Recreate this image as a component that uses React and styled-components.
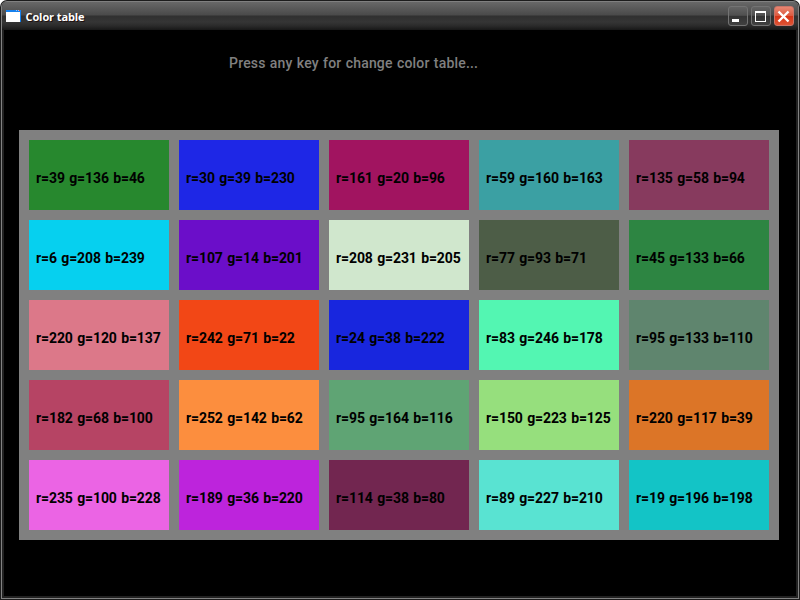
import React from 'react';
import styled, { createGlobalStyle } from 'styled-components';

const GlobalStyle = createGlobalStyle`
  * { box-sizing: border-box; }
  body { margin: 0; background: #fff; overflow: hidden; }
`;

const Window = styled.div`
  display: flex;
  width: 800px;
  height: 600px;
  padding: 1px;
  background: #1c1c1c;
  border-radius: 7px 7px 0 0;
`;

const Frame = styled.div`
  display: flex;
  flex-direction: column;
  flex: 1;
  padding: 0 2px 2px;
  background: #222;
  border: 1px solid #828282;
  border-top: 0;
  border-radius: 6px 6px 0 0;
  overflow: hidden;
`;

const TitleBar = styled.header`
  display: flex;
  align-items: flex-start;
  flex: 0 0 29px;
  margin: 0 -2px;
  padding: 4px 4px 0 4px;
  border-top: 1px solid #808080;
  background: linear-gradient(#686868 0, #5c5c5c 5px, #4a4a4a 13px, #303030 14px, #353535 20px, #2a2a2a 24px, #181818 28px);
`;

const AppIcon = styled.svg`
  margin-top: 4px;
`;

const Title = styled.h1`
  flex: 1;
  margin: 3px 0 0 4.5px;
  color: #fff;
  font: bold 11px/15px 'Open Sans', sans-serif;
  letter-spacing: -0.1px;
  text-shadow: 1px 1px 0 #201010;
`;

const Controls = styled.div`
  display: flex;
  gap: 3px;
`;

const ControlButton = styled.button`
  display: block;
  width: 20px;
  height: 20px;
  padding: 0;
  border: 1px solid ${(p) => (p.$close ? '#c97468' : '#737373')};
  border-radius: 3px;
  background: ${(p) =>
    p.$close
      ? 'linear-gradient(#e88672, #dc5a40 48%, #d63416 52%, #e05434)'
      : 'linear-gradient(#646464, #505050 46%, #343434 52%, #404040)'};

  svg { display: block; }
`;

const Client = styled.main`
  display: flex;
  flex-direction: column;
  flex: 1;
  padding: 23px 17px 0 15px;
  background: #000;
`;

const Prompt = styled.p`
  height: 77px;
  margin: 0 0 0 210px;
  color: #808080;
  font: 500 14px/20px Roboto, sans-serif;
  letter-spacing: 0.2px;
  word-spacing: 0.5px;
  white-space: nowrap;
`;

const Table = styled.section`
  display: grid;
  grid-template-columns: repeat(5, 140px);
  grid-auto-rows: 70px;
  gap: 10px;
  padding: 10px;
  width: 760px;
  background: #808080;
`;

const Swatch = styled.div`
  padding: 28px 0 0 7px;
  background: ${(p) => p.$color};
  color: #000;
  font: 700 14px/20px Roboto, sans-serif;
  letter-spacing: -0.1px;
  word-spacing: 1px;
  white-space: nowrap;
`;

const colors = [
  [39, 136, 46], [30, 39, 230], [161, 20, 96], [59, 160, 163], [135, 58, 94],
  [6, 208, 239], [107, 14, 201], [208, 231, 205], [77, 93, 71], [45, 133, 66],
  [220, 120, 137], [242, 71, 22], [24, 38, 222], [83, 246, 178], [95, 133, 110],
  [182, 68, 100], [252, 142, 62], [95, 164, 116], [150, 223, 125], [220, 117, 39],
  [235, 100, 228], [189, 36, 220], [114, 38, 80], [89, 227, 210], [19, 196, 198],
];

export default function App() {
  return (
    <>
      <GlobalStyle />
      <Window>
        <Frame>
          <TitleBar>
            <AppIcon width="15" height="12" shapeRendering="crispEdges">
              <path fill="#fff" d="M0 0h15v12H0z" />
              <path fill="#1680ec" d="M0 0h15v2H0zM14 2h1v10h-1z" />
              <path fill="#8cc4ff" d="M10 0h1v1h-1zM12 0h1v1h-1z" />
              <path fill="#e8562c" d="M13 0h1v1h-1z" />
            </AppIcon>
            <Title>Color table</Title>
            <Controls>
              <ControlButton aria-label="Minimize">
                <svg width="18" height="18"><path fill="#fff" d="M3 12h7v3H3z" /></svg>
              </ControlButton>
              <ControlButton aria-label="Maximize">
                <svg width="18" height="18"><path fill="#fff" fillRule="evenodd" d="M3 4h11v11H3zM4 6v8h9V6z" /></svg>
              </ControlButton>
              <ControlButton $close aria-label="Close">
                <svg width="18" height="18"><path stroke="#fff" strokeWidth="2.4" d="M3.5 4.5l10 10M13.5 4.5l-10 10" /></svg>
              </ControlButton>
            </Controls>
          </TitleBar>
          <Client>
            <Prompt>Press any key for change color table...</Prompt>
            <Table>
              {colors.map(([r, g, b]) => (
                <Swatch key={`${r}-${g}-${b}`} $color={`rgb(${r}, ${g}, ${b})`}>
                  {`r=${r} g=${g} b=${b}`}
                </Swatch>
              ))}
            </Table>
          </Client>
        </Frame>
      </Window>
    </>
  );
}
